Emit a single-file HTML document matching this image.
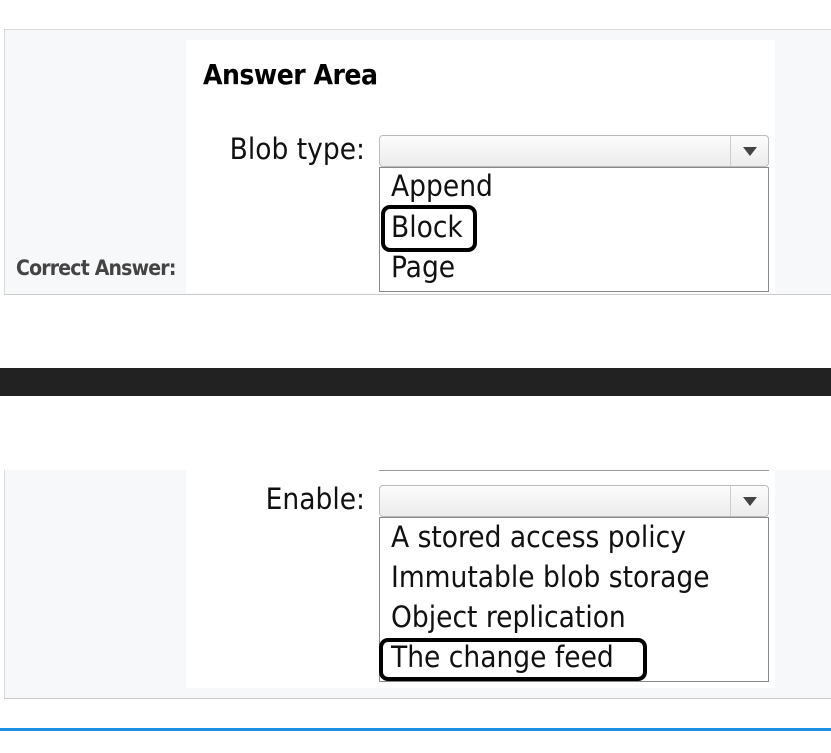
<!DOCTYPE html>
<html><head><style>
body{margin:0;width:831px;height:753px;background:#fff;position:relative;overflow:hidden;font-family:"Liberation Sans",sans-serif}
.abs{position:absolute}
.panel{background:#f7f8fa;border:1px solid #d8d8d8;border-right:none}
.img{background:#fff}
.t{font-family:"DejaVu Sans Condensed","Liberation Sans",sans-serif;color:#111;font-size:29.5px;white-space:nowrap;letter-spacing:0;line-height:34px}
.sel{border:1px solid #bbb;border-radius:4px;background:linear-gradient(#fcfcfc,#ececec);box-sizing:border-box}
.sel .btn{position:absolute;right:0;top:0;bottom:0;width:37px;border-left:1px solid #ccc}
.sel .btn:after{content:"";position:absolute;left:12px;top:11px;border-left:7px solid transparent;border-right:7px solid transparent;border-top:9px solid #444}
.list{border:1px solid #888;background:#fff;box-sizing:border-box}
.ring{border:4px solid #000;border-radius:9px;box-sizing:border-box}
</style></head><body>
<div class="abs panel" style="left:4px;top:29px;width:830px;height:264px;border-bottom:1px solid #ccc"></div>
<div class="abs img" style="left:186px;top:40px;width:589px;height:253px"></div>
<div class="abs" style="left:203px;top:58px;font-size:28px;font-weight:bold;color:#000;font-family:'DejaVu Sans Condensed','Liberation Sans',sans-serif;letter-spacing:-0.5px">Answer Area</div>
<div class="abs t" style="right:466px;top:132px">Blob type:</div>
<div class="abs sel" style="left:379px;top:135px;width:390px;height:32px"><div class="btn"></div></div>
<div class="abs list" style="left:379px;top:167px;width:390px;height:125px"></div>
<div class="abs t" style="left:391px;top:169px">Append</div>
<div class="abs t" style="left:391px;top:210px">Block</div>
<div class="abs t" style="left:391px;top:250px">Page</div>
<div class="abs ring" style="left:381px;top:205px;width:96px;height:47px"></div>
<div class="abs" style="left:16px;top:256px;font-size:21px;font-weight:bold;color:#444;font-family:'DejaVu Sans Condensed','Liberation Sans',sans-serif;letter-spacing:-0.8px">Correct Answer:</div>

<div class="abs" style="left:0;top:368px;width:831px;height:28px;background:#222"></div>

<div class="abs panel" style="left:4px;top:470px;width:830px;height:228px;border-top:none;border-bottom:1px solid #ccc"></div>
<div class="abs img" style="left:186px;top:470px;width:589px;height:218px"></div>
<div class="abs" style="left:379px;top:470px;width:390px;height:1px;background:#999"></div>
<div class="abs t" style="right:466px;top:482px">Enable:</div>
<div class="abs sel" style="left:379px;top:485px;width:390px;height:32px"><div class="btn"></div></div>
<div class="abs list" style="left:379px;top:517px;width:390px;height:165px"></div>
<div class="abs t" style="left:391px;top:520px">A stored access policy</div>
<div class="abs t" style="left:391px;top:560px">Immutable blob storage</div>
<div class="abs t" style="left:391px;top:600px">Object replication</div>
<div class="abs t" style="left:391px;top:640px">The change feed</div>
<div class="abs ring" style="left:379px;top:638px;width:268px;height:43px"></div>

<div class="abs" style="left:0;top:728px;width:831px;height:3px;background:#1a8fe3"></div>
</body></html>
